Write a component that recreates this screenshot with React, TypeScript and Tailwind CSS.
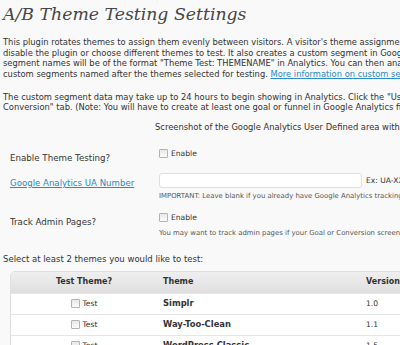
import React from "react";

function Box() {
  return (
    <span className="inline-block w-[9px] h-[9px] border border-[#b4b4b4] rounded-[1px] bg-gradient-to-b from-[#e8e8e8] to-[#fbfbfb] align-middle" />
  );
}

const themes = [
  { name: "Simplr", version: "1.0" },
  { name: "Way-Too-Clean", version: "1.1" },
  { name: "WordPress Classic", version: "1.5" },
];

export default function App() {
  return (
    <div className="w-[400px] h-[345px] overflow-hidden bg-[#f9f9f9] text-[#333] font-['DejaVu_Sans',Verdana,sans-serif]">
      <div className="w-[620px] pl-[3px]">
        <h2 className="h-[30px] pt-[2px] text-[17.3px] leading-[24px] italic text-[#464646] font-['DejaVu_Serif',Georgia,serif]">
          A/B Theme Testing Settings
        </h2>

        <div className="mt-[7px] text-[8.35px] leading-[10.67px] whitespace-nowrap">
          <div>
            This plugin rotates themes to assign them evenly between visitors. A visitor's theme assignment will remain the same.
          </div>
          <div>
            disable the plugin or choose different themes to test. It also creates a custom segment in Google Analytics for each theme.
          </div>
          <div>
            segment names will be of the format "Theme Test: THEMENAME" in Analytics. You can then analyze the
          </div>
          <div>
            custom segments named after the themes selected for testing.{" "}
            <a className="text-[#2a8bbd] underline">More information on custom segments</a>
          </div>
        </div>

        <div className="mt-[12px] text-[8.35px] leading-[10.67px] whitespace-nowrap">
          <div>
            The custom segment data may take up to 24 hours to begin showing in Analytics. Click the "User Defined" link under the "Goals &amp;
          </div>
          <div>
            Conversion" tab. (Note: You will have to create at least one goal or funnel in Google Analytics first.)
          </div>
        </div>

        <div className="mt-[9px] pl-[152px] text-[8.35px] leading-[10.67px] whitespace-nowrap">
          Screenshot of the Google Analytics User Defined area with test themes
        </div>

        <div className="mt-[10px] pl-[7px] grid grid-cols-[149px_1fr] text-[7.6px] whitespace-nowrap">
          <div className="h-[26px] pt-[9px] text-[8.7px]">Enable Theme Testing?</div>
          <div className="h-[26px] pt-[6px] flex items-start gap-[3px]">
            <Box />
            <span className="leading-[10px]">Enable</span>
          </div>

          <div className="pt-[8px] text-[8.6px]">
            <a className="text-[#2a8bbd] underline">Google Analytics UA Number</a>
          </div>
          <div className="pt-[4px]">
            <div className="flex items-center gap-[4px]">
              <div className="w-[203px] h-[15px] bg-white border border-[#dfdfdf] rounded-[3px]" />
              <span>Ex: UA-XXXXXXX-X</span>
            </div>
            <div className="mt-[4px] text-[6.9px] leading-[9px] text-[#555]">
              IMPORTANT: Leave blank if you already have Google Analytics tracking code on your site.
            </div>
          </div>

          <div className="h-[38px] pt-[15px] text-[8.7px]">Track Admin Pages?</div>
          <div className="h-[38px] pt-[12px]">
            <div className="flex items-start gap-[3px]">
              <Box />
              <span className="leading-[10px]">Enable</span>
            </div>
            <div className="mt-[6px] text-[6.9px] leading-[9px] text-[#555]">
              You may want to track admin pages if your Goal or Conversion screen occurs in the admin.
            </div>
          </div>
        </div>

        <div className="mt-[15px] text-[8.5px] leading-[11px] whitespace-nowrap">
          Select at least 2 themes you would like to test:
        </div>

        <div className="mt-[6px] ml-[7px] w-[560px] border border-[#dfdfdf] rounded-tl-[5px] overflow-hidden bg-white text-[7.6px] whitespace-nowrap">
          <div className="h-[21px] grid grid-cols-[146px_205px_1fr] items-center bg-gradient-to-b from-[#efefef] to-[#dfdfdf] font-bold text-[8px]">
            <div className="text-center">Test Theme?</div>
            <div className="pl-[6px]">Theme</div>
            <div className="pl-[4px]">Version</div>
          </div>
          {themes.map((t) => (
            <div key={t.name} className="h-[21px] grid grid-cols-[146px_205px_1fr] items-center border-t border-[#e6e6e6]">
              <div className="flex justify-center items-center gap-[3px]">
                <Box />
                <span>Test</span>
              </div>
              <div className="pl-[6px] font-bold text-[8.4px]">{t.name}</div>
              <div className="pl-[4px]">{t.version}</div>
            </div>
          ))}
        </div>
      </div>
    </div>
  );
}
